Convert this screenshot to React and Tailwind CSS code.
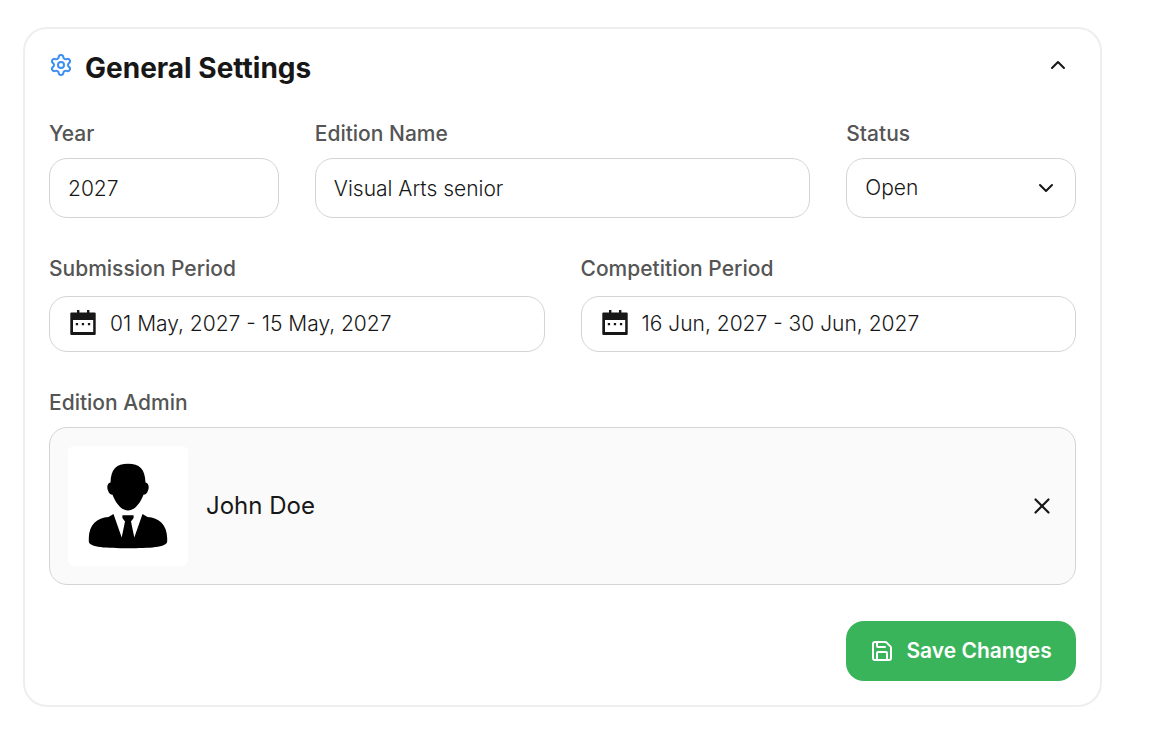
import React, { useState } from 'react'
import { ChevronDown, ChevronUp, Save, Settings, X } from 'lucide-react'

const LABEL = 'block text-[21px] leading-[30px] font-medium text-[#555555]'
const FIELD = 'w-full rounded-[18px] border border-[#d4d4d4] bg-white px-[18px] text-left text-[21px] font-light text-[#171717]'

function CalendarIcon() {
  return (
    <svg width="30" height="30" viewBox="0 0 30 30" aria-hidden="true" className="shrink-0">
      <path
        fill="#171717"
        fillRule="evenodd"
        d="M9 1h2.4v2.4h7.6V1h2.4v2.4h5.3a1 1 0 0 1 1 1V25a1 1 0 0 1-1 1H3.3a1 1 0 0 1-1-1V4.400a1 1 0 0 1 1-1H9zM5 11v12h20.200V11z"
      />
      <path fill="#171717" d="M7.800 14h2.300v2.300H7.800zM13.800 14h2.300v2.300h-2.300zM19.900 14h2.300v2.300h-2.300z" />
    </svg>
  )
}

function Avatar() {
  return (
    <svg width="120" height="120" viewBox="0 0 120 120" role="img" aria-label="John Doe" className="shrink-0 rounded-md bg-white">
      {/* head */}
      <path d="M60 17.700C71.500 17.700 77 22.500 77.500 36.500C80.500 37 81.500 41 80 44.500C79 47.500 77.500 48.500 75.500 48.700C72.500 57 66.500 64.500 60 64.500C53.500 64.500 47.500 57 44.500 48.700C42.500 48.500 41 47.500 40 44.500C38.500 41 39.500 37 42.500 36.500C43 22.500 48.500 17.700 60 17.700Z" />
      {/* suit */}
      <path d="M45.500 68L53.700 91.500L57 75.500L54.400 72V69.200H65.600V72L63 75.500L66.300 91.500L74.500 68L79.500 71C91 71.500 99 79 99.200 92V95.500C99 101.500 81 102.200 60 102.200C39 102.200 21 101.500 20.800 95.500V92C21 79 29 71.500 40.500 71Z" />
    </svg>
  )
}

function DateField({ id, label, value }) {
  return (
    <div className="col-span-2">
      <label htmlFor={id} className={`${LABEL} mb-3`}>{label}</label>
      <button id={id} type="button" className={`${FIELD} flex h-14 items-center gap-3`}>
        <CalendarIcon />
        {value}
      </button>
    </div>
  )
}

export default function App() {
  const [open, setOpen] = useState(true)
  const [year, setYear] = useState('2027')
  const [name, setName] = useState('Visual Arts senior')
  const [status, setStatus] = useState('Open')
  const [admin, setAdmin] = useState('John Doe')

  return (
    <main className="min-h-screen bg-white pt-[27px] pr-[47px] pb-9 pl-[23px] font-[Inter,'Liberation_Sans',sans-serif]">
      <section className="rounded-3xl border-2 border-[#eeeeee] p-6">
        {/* Header */}
        <div className="mb-9 flex h-[30px] items-start justify-between">
          <div className="flex items-start gap-3">
            <Settings size={24} className="text-[#3b8ff3]" />
            <h2 className="text-[28px] leading-[30px] font-bold text-[#171717]">General Settings</h2>
          </div>
          <button
            type="button"
            aria-label="Toggle general settings"
            onClick={() => setOpen(o => !o)}
            className="flex w-9 justify-center text-[#171717]"
          >
            {open ? <ChevronUp size={24} /> : <ChevronDown size={24} />}
          </button>
        </div>

        {open && (
          <form onSubmit={e => e.preventDefault()} className="grid grid-cols-4 gap-9">
            <div>
              <label htmlFor="year" className={`${LABEL} mb-[9px]`}>Year</label>
              <input id="year" value={year} onChange={e => setYear(e.target.value)} className={`${FIELD} h-[60px]`} />
            </div>
            <div className="col-span-2">
              <label htmlFor="name" className={`${LABEL} mb-[9px]`}>Edition Name</label>
              <input id="name" value={name} onChange={e => setName(e.target.value)} className={`${FIELD} h-[60px]`} />
            </div>
            <div>
              <label htmlFor="status" className={`${LABEL} mb-[9px]`}>Status</label>
              <div className="relative">
                <select
                  id="status"
                  value={status}
                  onChange={e => setStatus(e.target.value)}
                  className={`${FIELD} h-[60px] appearance-none`}
                >
                  <option>Open</option>
                  <option>Closed</option>
                </select>
                <ChevronDown size={24} className="pointer-events-none absolute inset-y-0 right-[18px] my-auto text-[#171717]" />
              </div>
            </div>

            <DateField id="submission" label="Submission Period" value="01 May, 2027 - 15 May, 2027" />
            <DateField id="competition" label="Competition Period" value="16 Jun, 2027 - 30 Jun, 2027" />

            {/* Admin */}
            <div className="col-span-4">
              <h3 className={`${LABEL} mb-[9px]`}>Edition Admin</h3>
              <div className="flex items-center gap-[18px] rounded-[18px] border border-[#d4d4d4] bg-[#fafafa] p-[18px]">
                {admin && <Avatar />}
                <span className="grow text-2xl text-[#171717]">{admin}</span>
                <button
                  type="button"
                  aria-label="Remove admin"
                  onClick={() => setAdmin('')}
                  className="flex w-[30px] justify-center text-[#171717]"
                >
                  <X size={26} strokeWidth={2} />
                </button>
              </div>
            </div>

            <button
              type="submit"
              className="col-start-4 flex h-[60px] items-center justify-center gap-3 rounded-[18px] bg-[#3ab45b] text-[21px] font-semibold whitespace-nowrap text-white"
            >
              <Save size={24} />
              Save Changes
            </button>
          </form>
        )}
      </section>
    </main>
  )
}
